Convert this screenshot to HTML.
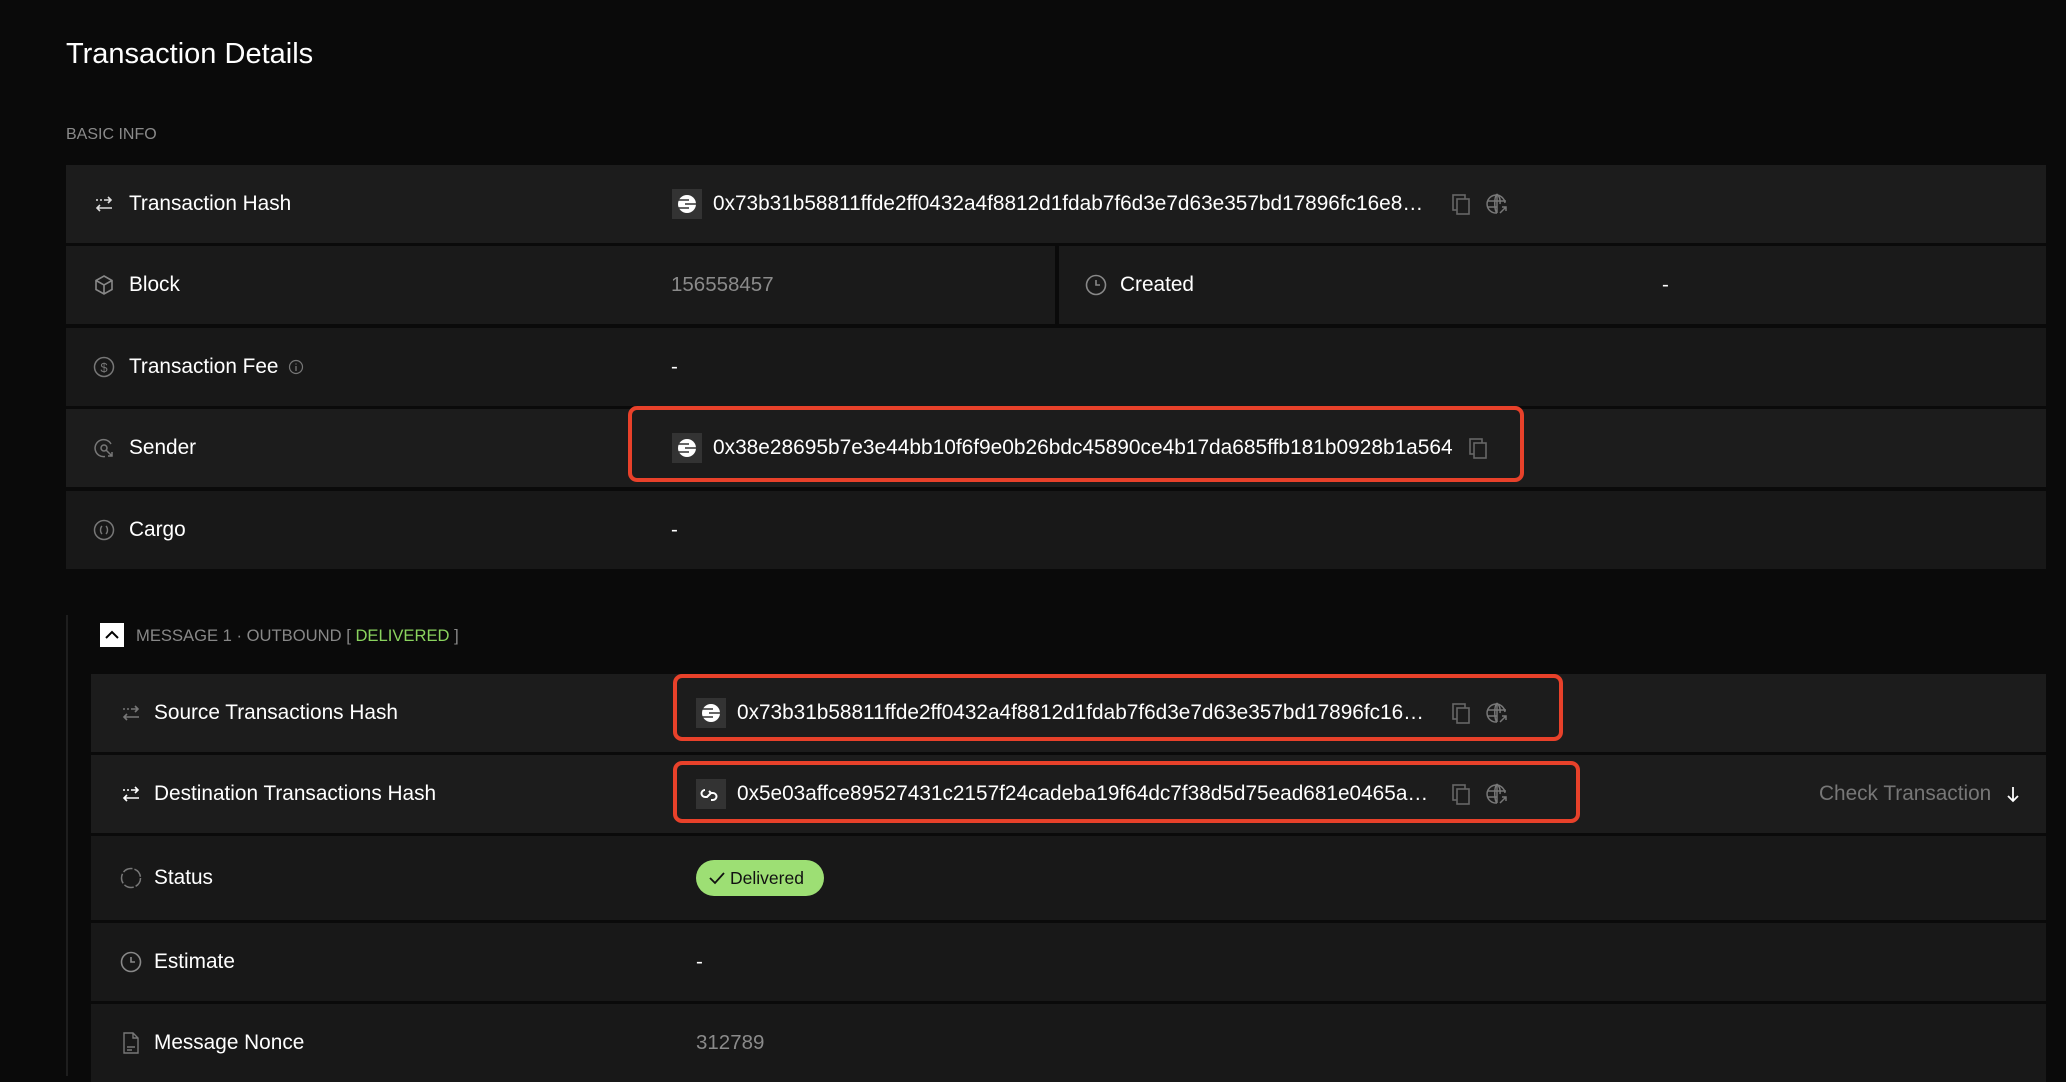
<!DOCTYPE html>
<html><head><meta charset="utf-8"><style>
*{margin:0;padding:0;box-sizing:border-box}
body{width:2066px;height:1076px;background:#0a0a0a;font-family:"Liberation Sans",Arial,sans-serif;color:#fff;position:relative;overflow:hidden}
.a{position:absolute}
.row{position:absolute;left:66px;width:1980px;height:78px}
.d1{background:#1c1c1c}.d2{background:#181818}
.ic{position:absolute;width:24px;height:24px;top:50%;margin-top:-12px}
.lb{position:absolute;font-size:20.8px;top:50%;transform:translateY(-50%);white-space:nowrap}
.val{position:absolute;font-size:20.5px;top:50%;transform:translateY(-50%);white-space:nowrap}
.hx{position:absolute;font-size:20.8px;top:50%;transform:translateY(-50%);white-space:nowrap;overflow:hidden;text-overflow:ellipsis}
.box{position:absolute;width:30px;height:30px;background:#333;top:50%;margin-top:-15px}
.red{position:absolute;border:4px solid #e8412a;border-radius:9px}
</style></head><body>
<div class="a" style="left:66px;top:38px;font-size:29px">Transaction Details</div>
<div class="a" style="left:66px;top:126px;font-size:16px;color:#8a8a8a">BASIC INFO</div>

<svg width="0" height="0" style="position:absolute"><defs>
<symbol id="arr" viewBox="0 0 24 24"><path d="M4 8h2M8 8h2M12 8h6M16 5l3 3-3 3M20 16H5M8 13l-3 3 3 3" fill="none" stroke="currentColor" stroke-width="1.6"/></symbol>
<symbol id="copy" viewBox="0 0 24 24"><rect x="4" y="3" width="12" height="15" fill="none" stroke="currentColor" stroke-width="1.6"/><rect x="8" y="7" width="12" height="15" fill="#1c1c1c" stroke="currentColor" stroke-width="1.6"/></symbol>
<symbol id="globe" viewBox="0 0 24 24"><g fill="none" stroke="currentColor" stroke-width="1.5"><path d="M20 11A9 9 0 1 0 12 21"/><path d="M12 2c-3 3-3 16 0 19M12 2c3 3 3.5 7 3 10M3 9h18M3 15h9M12 2v19"/><path d="M15 21l6-6M17 15h4v4"/></g></symbol>
<symbol id="eth" viewBox="0 0 30 30"><circle cx="15" cy="15" r="9" fill="#fff"/><path d="M6 11h11M13 15h11M6 19h11" stroke="#333" stroke-width="1.6"/></symbol>
</defs></svg>

<div class="row d1" style="top:165px">
<svg class="ic" style="left:26px;color:#ddd"><use href="#arr"/></svg>
<div class="lb" style="left:63px">Transaction Hash</div>
<div class="box" style="left:606px"><svg width="30" height="30"><use href="#eth"/></svg></div>
<div class="hx" style="left:647px;width:714px">0x73b31b58811ffde2ff0432a4f8812d1fdab7f6d3e7d63e357bd17896fc16e8a1b2</div>
<svg class="ic" style="left:1383px;color:#666"><use href="#copy"/></svg>
<svg class="ic" style="left:1419px;color:#777"><use href="#globe"/></svg>
</div>
<div class="row d1" style="top:246px;background:#1a1a1a">
<svg class="ic" style="left:26px;color:#888" viewBox="0 0 24 24"><path d="M12 3l8 4.5v9L12 21l-8-4.5v-9zM4 7.5l8 4.5 8-4.5M12 12v9" fill="none" stroke="currentColor" stroke-width="1.6"/></svg>
<div class="lb" style="left:63px">Block</div>
<div class="val" style="left:605px;color:#8a8a8a">156558457</div>
<div class="a" style="left:989px;top:0;width:4px;height:78px;background:#0a0a0a"></div>
<svg class="ic" style="left:1018px;color:#888" viewBox="0 0 24 24"><circle cx="12" cy="12" r="9.5" fill="none" stroke="currentColor" stroke-width="1.6"/><path d="M12 7v5h4" fill="none" stroke="currentColor" stroke-width="1.6"/></svg>
<div class="lb" style="left:1054px">Created</div>
<div class="val" style="left:1596px">-</div>
</div>
<div class="row d2" style="top:328px">
<svg class="ic" style="left:26px;color:#777" viewBox="0 0 24 24"><circle cx="12" cy="12" r="9.5" fill="none" stroke="currentColor" stroke-width="1.5"/><text x="12" y="17" font-size="13" text-anchor="middle" fill="currentColor" font-family="Liberation Sans">$</text></svg>
<div class="lb" style="left:63px">Transaction Fee</div>
<svg class="a" style="left:222px;top:31px" width="16" height="16" viewBox="0 0 16 16"><circle cx="8" cy="8" r="6.5" fill="none" stroke="#777" stroke-width="1.2"/><path d="M8 7v5M8 4.5v1" stroke="#777" stroke-width="1.3"/></svg>
<div class="val" style="left:605px">-</div>
</div>
<div class="row d1" style="top:409px">
<svg class="ic" style="left:26px;color:#777" viewBox="0 0 24 24"><path d="M19 8A8.5 8.5 0 1 0 13 20.5" fill="none" stroke="currentColor" stroke-width="1.5"/><circle cx="12" cy="12" r="3" fill="none" stroke="currentColor" stroke-width="1.5"/><path d="M14 14l6 6M16 20h4v-4" fill="none" stroke="currentColor" stroke-width="1.5"/></svg>
<div class="lb" style="left:63px">Sender</div>
<div class="box" style="left:606px"><svg width="30" height="30"><use href="#eth"/></svg></div>
<div class="val" style="left:647px;font-size:20.9px">0x38e28695b7e3e44bb10f6f9e0b26bdc45890ce4b17da685ffb181b0928b1a564</div>
<svg class="ic" style="left:1400px;color:#666"><use href="#copy"/></svg>
</div>
<div class="red" style="left:628px;top:406px;width:896px;height:76px"></div>
<div class="row d2" style="top:491px">
<svg class="ic" style="left:26px;color:#777" viewBox="0 0 24 24"><circle cx="12" cy="12" r="9.5" fill="none" stroke="currentColor" stroke-width="1.5"/><path d="M10 8c-2 2-2 6 0 8M14 8c2 2 2 6 0 8" fill="none" stroke="currentColor" stroke-width="1.4"/></svg>
<div class="lb" style="left:63px">Cargo</div>
<div class="val" style="left:605px">-</div>
</div>

<div class="a" style="left:66px;top:615px;width:2px;height:461px;background:#1e1e1e"></div>
<div class="a" style="left:100px;top:623px;width:24px;height:24px;background:#fff"><svg width="24" height="24"><path d="M6 15l6-6 6 6" fill="none" stroke="#000" stroke-width="2"/></svg></div>
<div class="a" style="left:136px;top:626px;font-size:16.6px;color:#888;white-space:nowrap">MESSAGE 1 · OUTBOUND [ <span style="color:#8ad35e">DELIVERED</span> ]</div>

<div class="row d1" style="left:91px;width:1955px;top:674px">
<svg class="ic" style="left:28px;color:#777"><use href="#arr"/></svg>
<div class="lb" style="left:63px">Source Transactions Hash</div>
<div class="box" style="left:605px"><svg width="30" height="30"><use href="#eth"/></svg></div>
<div class="hx" style="left:646px;width:694px">0x73b31b58811ffde2ff0432a4f8812d1fdab7f6d3e7d63e357bd17896fc16e8a1b2</div>
<svg class="ic" style="left:1358px;color:#666"><use href="#copy"/></svg>
<svg class="ic" style="left:1394px;color:#777"><use href="#globe"/></svg>
</div>
<div class="red" style="left:673px;top:674px;width:890px;height:67px"></div>

<div class="row d1" style="left:91px;width:1955px;top:755px">
<svg class="ic" style="left:28px;color:#fff"><use href="#arr"/></svg>
<div class="lb" style="left:63px">Destination Transactions Hash</div>
<div class="box" style="left:605px"><svg width="30" height="30" viewBox="0 0 30 30"><path d="M9 11a3.5 3.5 0 1 0 0 7h2l4-4h2a3.5 3.5 0 1 1 0 7h-2M15 14l-2-2" fill="none" stroke="#fff" stroke-width="2"/></svg></div>
<div class="hx" style="left:646px;width:692px">0x5e03affce89527431c2157f24cadeba19f64dc7f38d5d75ead681e0465a9c2b7f1</div>
<svg class="ic" style="left:1358px;color:#666"><use href="#copy"/></svg>
<svg class="ic" style="left:1394px;color:#777"><use href="#globe"/></svg>
<div class="val" style="left:1728px;color:#777;font-size:20.8px">Check Transaction</div>
<svg class="ic" style="left:1910px;color:#fff" viewBox="0 0 24 24"><path d="M12 5v14M7 14l5 5 5-5" fill="none" stroke="currentColor" stroke-width="1.8"/></svg>
</div>
<div class="red" style="left:673px;top:761px;width:907px;height:62px"></div>

<div class="row d2" style="left:91px;width:1955px;top:836px;height:84px">
<svg class="ic" style="left:28px;color:#777" viewBox="0 0 24 24"><circle cx="12" cy="12" r="9.5" fill="none" stroke="currentColor" stroke-width="1.5" stroke-dasharray="10 2"/></svg>
<div class="lb" style="left:63px">Status</div>
<div class="a" style="left:605px;top:24px;width:128px;height:36px;border-radius:18px;background:#9ddf74;color:#111;font-size:17.5px;line-height:36px;padding-left:34px">Delivered</div>
<svg class="a" style="left:617px;top:34px" width="18" height="16"><path d="M2 8l5 5 9-10" fill="none" stroke="#111" stroke-width="1.8"/></svg>
</div>
<div class="row d2" style="left:91px;width:1955px;top:923px">
<svg class="ic" style="left:28px;color:#888" viewBox="0 0 24 24"><circle cx="12" cy="12" r="9.5" fill="none" stroke="currentColor" stroke-width="1.6"/><path d="M12 7v5h4" fill="none" stroke="currentColor" stroke-width="1.6"/></svg>
<div class="lb" style="left:63px">Estimate</div>
<div class="val" style="left:605px">-</div>
</div>
<div class="row d2" style="left:91px;width:1955px;top:1004px">
<svg class="ic" style="left:28px;color:#777" viewBox="0 0 24 24"><path d="M5 2h9l5 5v15H5zM14 2v5h5M8 16h8M8 19h5" fill="none" stroke="currentColor" stroke-width="1.4"/></svg>
<div class="lb" style="left:63px">Message Nonce</div>
<div class="val" style="left:605px;color:#8a8a8a">312789</div>
</div>
</body></html>
